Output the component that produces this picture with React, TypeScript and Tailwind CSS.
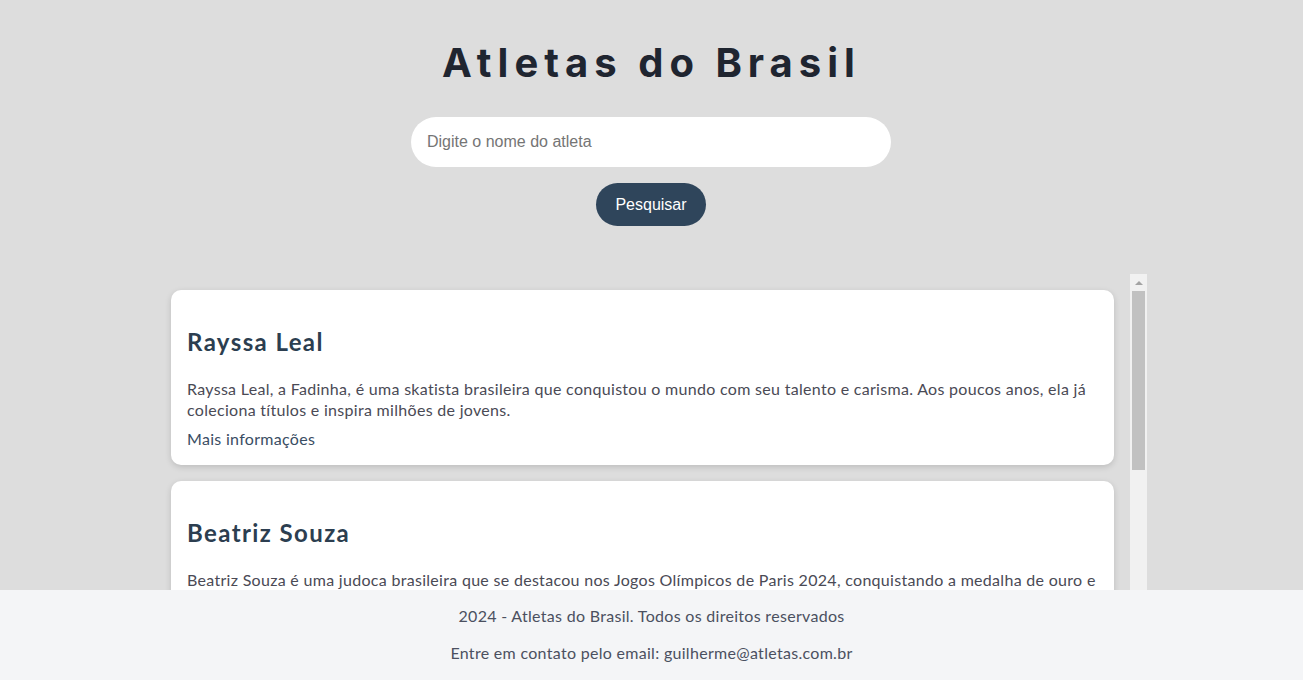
import { useState } from "react"

const atletas = [
  {
    nome: "Rayssa Leal",
    texto:
      "Rayssa Leal, a Fadinha, é uma skatista brasileira que conquistou o mundo com seu talento e carisma. Aos poucos anos, ela já coleciona títulos e inspira milhões de jovens.",
  },
  {
    nome: "Beatriz Souza",
    texto:
      "Beatriz Souza é uma judoca brasileira que se destacou nos Jogos Olímpicos de Paris 2024, conquistando a medalha de ouro e emocionando todo o país com sua força e determinação.",
  },
  {
    nome: "Rebeca Andrade",
    texto:
      "Rebeca Andrade é uma ginasta brasileira, dona de várias medalhas olímpicas e mundiais, considerada uma das maiores atletas da história do esporte nacional.",
  },
  {
    nome: "Isaquias Queiroz",
    texto:
      "Isaquias Queiroz é um canoísta brasileiro, multimedalhista olímpico, conhecido pela sua garra e pelas conquistas históricas na canoagem de velocidade.",
  },
]

export default function App() {
  const [busca, setBusca] = useState("")

  return (
    <div className="min-h-screen bg-[#dddddd] flex flex-col items-center font-['Lato',sans-serif] tracking-[0.3px]">
      {/* Header */}
      <h1 className="mt-[39px] text-[40px] leading-[48px] font-bold tracking-[6px] text-[#1f2530] font-['Inter',sans-serif]">
        Atletas do Brasil
      </h1>

      <input
        value={busca}
        onChange={(e) => setBusca(e.target.value)}
        placeholder="Digite o nome do atleta"
        className="mt-[30px] mr-px w-[480px] h-[50px] rounded-full bg-white px-4 text-base tracking-normal text-gray-800 placeholder:text-[#757575] outline-none font-['Liberation_Sans',Arial,sans-serif]"
      />

      <button className="mt-4 mr-px w-[110px] h-[43px] rounded-full bg-[#2f455b] text-white text-base tracking-normal font-['Liberation_Sans',Arial,sans-serif]">
        Pesquisar
      </button>

      {/* Lista */}
      <div className="relative mt-12 mr-px w-[992px] h-[400px]">
        <div className="h-full overflow-hidden pt-4 pl-4 pr-[33px] flex flex-col gap-4">
          {atletas.map((a) => (
            <div key={a.nome} className="bg-white rounded-[10px] shadow-[0_2px_6px_rgba(0,0,0,0.15)] px-4 pb-4 shrink-0">
              <h2 className="mt-[36px] text-2xl leading-8 font-bold tracking-[1.4px] text-[#2c3e50]">{a.nome}</h2>
              <p className="mt-5 text-base leading-[21px] text-[#4a4a55]">{a.texto}</p>
              <a href="#" className="block mt-2 text-base leading-[21px] text-[#3a4d63]">
                Mais informações
              </a>
            </div>
          ))}
        </div>

        {/* scrollbar */}
        <div className="absolute top-0 right-0 w-[17px] h-full bg-[#f1f1f1] flex flex-col items-center">
          <div className="h-[17px] w-full flex items-center justify-center">
            <div className="w-0 h-0 border-x-[4px] border-x-transparent border-b-[4px] border-b-[#a3a3a3]" />
          </div>
          <div className="w-[13px] h-[179px] bg-[#c1c1c1]" />
        </div>
      </div>

      {/* Footer */}
      <footer className="fixed bottom-0 left-0 right-0 h-[90px] bg-[#f4f5f7] flex flex-col items-center pt-[14px] text-base text-[#4b5060]">
        <p className="leading-6">2024 - Atletas do Brasil. Todos os direitos reservados</p>
        <p className="leading-6 mt-[13px]">Entre em contato pelo email: guilherme@atletas.com.br</p>
      </footer>
    </div>
  )
}
